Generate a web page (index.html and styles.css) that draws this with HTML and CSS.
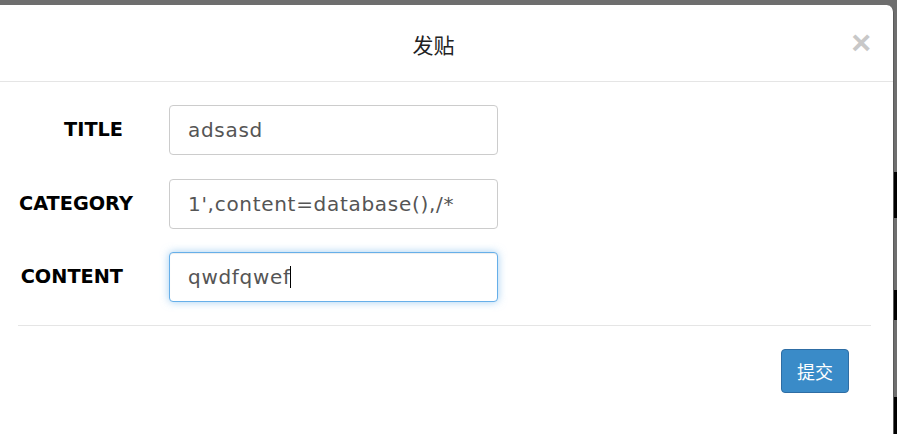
FILE: index.html
```html
<!DOCTYPE html>
<html>
<head>
<meta charset="utf-8">
<link rel="stylesheet" href="styles.css">
</head>
<body>
<div class="modal">
  <div class="modal-header">
    <h4 class="modal-title">发贴</h4>
    <button class="close" type="button">×</button>
  </div>
  <form class="modal-body">
    <div class="row">
      <label class="label">TITLE</label>
      <input class="field" type="text" value="adsasd">
    </div>
    <div class="row">
      <label class="label">CATEGORY</label>
      <input class="field" type="text" value="1',content=database(),/*">
    </div>
    <div class="row">
      <label class="label">CONTENT</label>
      <div class="field focus">qwdfqwef<span class="caret"></span></div>
    </div>
  </form>
  <div class="modal-footer">
    <button class="btn" type="button">提交</button>
  </div>
</div>
</body>
</html>
```
FILE: styles.css
```css
html, body {
  margin: 0;
  padding: 0;
}
body {
  width: 897px;
  height: 434px;
  overflow: hidden;
  background: linear-gradient(to bottom, #6e6e6e 0, #6e6e6e 172px, #000 172px, #000 218px, #6e6e6e 218px, #6e6e6e 290px, #000 290px, #000 320px, #6e6e6e 320px, #6e6e6e 397px, #000 397px);
  font-family: Tahoma, "DejaVu Sans", "Noto Sans CJK SC", sans-serif;
}
.modal {
  margin-top: 5px;
  width: 893px;
  height: 440px;
  background: #fff;
  border-right: 1px solid #5a5a5a;
  border-radius: 0 7px 0 0;
}
.modal-header {
  height: 76px;
  border-bottom: 1px solid #e5e5e5;
  display: flex;
  align-items: center;
  justify-content: center;
  padding-right: 26px;
  position: relative;
}
.modal-title {
  margin: 0;
  font-family: "Noto Sans CJK SC", sans-serif;
  font-weight: 400;
  font-size: 21px;
  color: #222;
  padding-top: 2px;
}
.close {
  position: absolute;
  right: 22px;
  top: 20px;
  border: 0;
  background: none;
  padding: 0;
  font-family: "Liberation Sans", Arial, sans-serif;
  font-size: 34px;
  font-weight: 700;
  color: #c8c8c8;
  line-height: 34px;
}
.modal-body {
  margin: 0;
  padding: 23px 0 0 0;
  display: flex;
  flex-direction: column;
  gap: 23.5px;
}
.row {
  display: flex;
  align-items: center;
  height: 50px;
}
.label {
  flex: none;
  width: 104px;
  margin-left: 19px;
  margin-right: 46px;
  text-align: right;
  white-space: nowrap;
  font-weight: 700;
  font-size: 19.3px;
  color: #000;
  padding-bottom: 1px;
}
.field {
  box-sizing: border-box;
  width: 329px;
  height: 50px;
  border: 1px solid #ccc;
  border-radius: 4px;
  padding: 0 18px;
  font-family: "DejaVu Sans", sans-serif;
  font-size: 20px;
  letter-spacing: 0.7px;
  color: #555;
  outline: none;
  background: #fff;
}
.field.focus {
  display: flex;
  align-items: center;
  border-color: #66afe9;
  box-shadow: inset 0 1px 1px rgba(0,0,0,.075), 0 0 8px rgba(102,175,233,.6);
}
.caret {
  display: inline-block;
  width: 1px;
  height: 22px;
  background: #000;
  margin-left: -1px;
}
.modal-footer {
  margin: 23px 22px 0 18px;
  border-top: 1px solid #e5e5e5;
  padding-top: 23px;
  display: flex;
  justify-content: flex-end;
}
.btn {
  width: 68px;
  height: 44px;
  border: 1px solid #2e6da4;
  border-radius: 4px;
  background: #3a8bc8;
  color: #fff;
  font-family: "Noto Sans CJK SC", sans-serif;
  font-size: 18px;
  padding: 0;
  margin-right: 22px;
}
```
